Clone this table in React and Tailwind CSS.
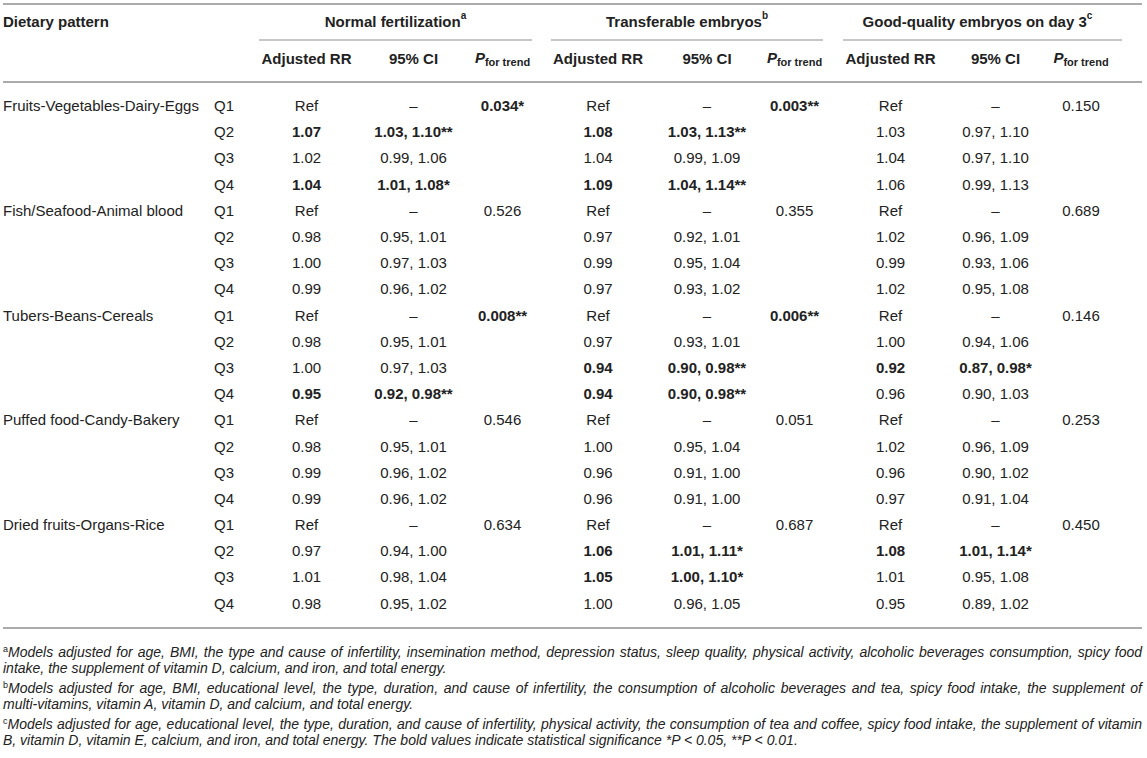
import React from "react";

const COLS =
  "grid grid-cols-[203px_44px_113px_101px_77px_114px_104px_71px_121px_89px_82px]";

const data = [
  [
    "Fruits-Vegetables-Dairy-Eggs",
    [
      ["Ref", "–", "!0.034*", "Ref", "–", "!0.003**", "Ref", "–", "0.150"],
      ["!1.07", "!1.03, 1.10**", "", "!1.08", "!1.03, 1.13**", "", "1.03", "0.97, 1.10", ""],
      ["1.02", "0.99, 1.06", "", "1.04", "0.99, 1.09", "", "1.04", "0.97, 1.10", ""],
      ["!1.04", "!1.01, 1.08*", "", "!1.09", "!1.04, 1.14**", "", "1.06", "0.99, 1.13", ""],
    ],
  ],
  [
    "Fish/Seafood-Animal blood",
    [
      ["Ref", "–", "0.526", "Ref", "–", "0.355", "Ref", "–", "0.689"],
      ["0.98", "0.95, 1.01", "", "0.97", "0.92, 1.01", "", "1.02", "0.96, 1.09", ""],
      ["1.00", "0.97, 1.03", "", "0.99", "0.95, 1.04", "", "0.99", "0.93, 1.06", ""],
      ["0.99", "0.96, 1.02", "", "0.97", "0.93, 1.02", "", "1.02", "0.95, 1.08", ""],
    ],
  ],
  [
    "Tubers-Beans-Cereals",
    [
      ["Ref", "–", "!0.008**", "Ref", "–", "!0.006**", "Ref", "–", "0.146"],
      ["0.98", "0.95, 1.01", "", "0.97", "0.93, 1.01", "", "1.00", "0.94, 1.06", ""],
      ["1.00", "0.97, 1.03", "", "!0.94", "!0.90, 0.98**", "", "!0.92", "!0.87, 0.98*", ""],
      ["!0.95", "!0.92, 0.98**", "", "!0.94", "!0.90, 0.98**", "", "0.96", "0.90, 1.03", ""],
    ],
  ],
  [
    "Puffed food-Candy-Bakery",
    [
      ["Ref", "–", "0.546", "Ref", "–", "0.051", "Ref", "–", "0.253"],
      ["0.98", "0.95, 1.01", "", "1.00", "0.95, 1.04", "", "1.02", "0.96, 1.09", ""],
      ["0.99", "0.96, 1.02", "", "0.96", "0.91, 1.00", "", "0.96", "0.90, 1.02", ""],
      ["0.99", "0.96, 1.02", "", "0.96", "0.91, 1.00", "", "0.97", "0.91, 1.04", ""],
    ],
  ],
  [
    "Dried fruits-Organs-Rice",
    [
      ["Ref", "–", "0.634", "Ref", "–", "0.687", "Ref", "–", "0.450"],
      ["0.97", "0.94, 1.00", "", "!1.06", "!1.01, 1.11*", "", "!1.08", "!1.01, 1.14*", ""],
      ["1.01", "0.98, 1.04", "", "!1.05", "!1.00, 1.10*", "", "1.01", "0.95, 1.08", ""],
      ["0.98", "0.95, 1.02", "", "1.00", "0.96, 1.05", "", "0.95", "0.89, 1.02", ""],
    ],
  ],
];

function PTrend() {
  return (
    <span className="font-bold whitespace-nowrap">
      <span className="italic">P</span>
      <span className="text-[11px] relative top-[3px]">for trend</span>
    </span>
  );
}

function Rule() {
  return <div className="h-[2px] bg-[#ababab]" />;
}

function GroupHead({ children, sup, ml, mr, pr }) {
  return (
    <div className="col-span-3 flex flex-col">
      <div className={`flex flex-col ${ml} ${mr}`}>
        <div
          className={`h-[34px] flex items-center justify-center font-bold whitespace-nowrap ${pr}`}
        >
          {children}
          <sup className="text-[10px] top-[-0.6em]">{sup}</sup>
        </div>
        <div className="h-[2px] bg-[#c6c6c6]" />
      </div>
    </div>
  );
}

function FootLine({ children, last }) {
  return (
    <div
      className={`whitespace-nowrap ${
        last ? "" : "text-justify [text-align-last:justify]"
      }`}
    >
      {children}
    </div>
  );
}

export default function App() {
  return (
    <div
      className="w-[1147px] h-[758px] bg-white text-[#222] overflow-hidden"
      style={{ fontFamily: '"Liberation Sans", Arial, sans-serif' }}
    >
      <div className="ml-[3px] w-[1139px] pt-[3px] text-[15px] leading-[18px]">
        <Rule />
        {/* header row A */}
        <div className={COLS}>
          <div className="col-span-2 h-[34px] flex items-center font-bold">
            Dietary pattern
          </div>
          <GroupHead sup="a" ml="ml-[9px]" mr="mr-[9px]" pr="">
            Normal fertilization
          </GroupHead>
          <GroupHead sup="b" ml="ml-[10px]" mr="mr-[7px]" pr="">
            Transferable embryos
          </GroupHead>
          <GroupHead sup="c" ml="ml-[13px]" mr="mr-0" pr="pr-[10px]">
            Good-quality embryos on day 3
          </GroupHead>
        </div>
        {/* header row B */}
        <div className={`${COLS} h-[40px] pb-[5px] items-center font-bold`}>
          <div className="col-span-2" />
          {[0, 1, 2].map((g) => (
            <React.Fragment key={g}>
              <div className="text-center whitespace-nowrap">Adjusted RR</div>
              <div className="text-center whitespace-nowrap">95% CI</div>
              <div className="text-center">
                <PTrend />
              </div>
            </React.Fragment>
          ))}
        </div>
        <Rule />
        {/* body */}
        <div className="py-[10px]">
          {data.map(([name, rows]) =>
            rows.map((cells, qi) => (
              <div key={name + qi} className={`${COLS} h-[26.2px] items-center`}>
                <div className="whitespace-nowrap">{qi === 0 ? name : ""}</div>
                <div className="pl-[8px]">Q{qi + 1}</div>
                {cells.map((c, ci) => {
                  const bold = c.startsWith("!");
                  const txt = bold ? c.slice(1) : c;
                  return (
                    <div
                      key={ci}
                      className={`text-center whitespace-nowrap ${bold ? "font-bold" : ""}`}
                    >
                      {txt}
                    </div>
                  );
                })}
              </div>
            ))
          )}
        </div>
        <Rule />
        {/* footnotes */}
        <div className="mt-[15px] text-[14px] leading-[16px] italic text-[#222]">
          <div>
            <FootLine>
              <sup className="not-italic text-[9px]">a</sup>Models adjusted for age, BMI, the type and cause of
              infertility, insemination method, depression status, sleep quality, physical activity, alcoholic
              beverages consumption, spicy food
            </FootLine>
            <FootLine last>
              intake, the supplement of vitamin D, calcium, and iron, and total energy.
            </FootLine>
          </div>
          <div className="mt-[4px]">
            <FootLine>
              <sup className="not-italic text-[9px]">b</sup>Models adjusted for age, BMI, educational level, the
              type, duration, and cause of infertility, the consumption of alcoholic beverages and tea, spicy food
              intake, the supplement of
            </FootLine>
            <FootLine last>
              multi-vitamins, vitamin A, vitamin D, and calcium, and total energy.
            </FootLine>
          </div>
          <div className="mt-[4px]">
            <FootLine>
              <sup className="not-italic text-[9px]">c</sup>Models adjusted for age, educational level, the type,
              duration, and cause of infertility, physical activity, the consumption of tea and coffee, spicy food
              intake, the supplement of vitamin
            </FootLine>
            <FootLine last>
              B, vitamin D, vitamin E, calcium, and iron, and total energy. The bold values indicate statistical
              significance *P &lt; 0.05, **P &lt; 0.01.
            </FootLine>
          </div>
        </div>
      </div>
    </div>
  );
}
